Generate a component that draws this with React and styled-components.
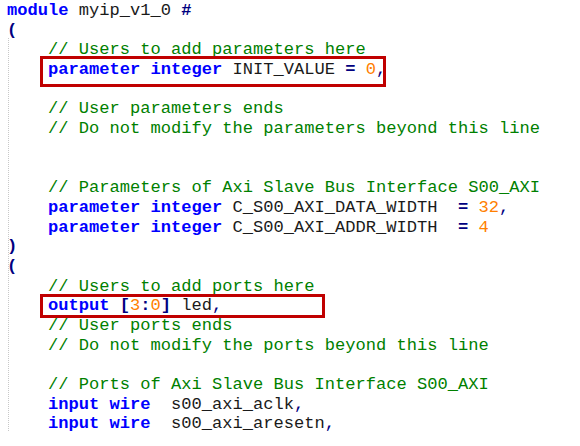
import React from "react";
import styled, { createGlobalStyle } from "styled-components";

const GlobalStyle = createGlobalStyle`
  html, body {
    margin: 0;
    padding: 0;
    background: #ffffff;
  }
`;

const LINE = 19.7;

// Editor surface
const Editor = styled.div`
  position: relative;
  width: 580px;
  height: 446px;
  overflow: hidden;
  background: #ffffff;
  padding: 1px 0 0 7px;
  box-sizing: border-box;
  font-family: "Liberation Mono", "Courier New", monospace;
  font-size: 17.08px;
  line-height: ${LINE}px;
  color: #1a1a1a;
`;

const Line = styled.div`
  position: relative;
  height: ${LINE}px;
  white-space: pre;
`;

const Guide = styled.div`
  position: absolute;
  left: 8px;
  top: 38px;
  height: 393px;
  border-left: 1px dotted #c8c8c8;
`;

const Highlight = styled.div`
  position: absolute;
  left: ${(p) => p.left}px;
  width: ${(p) => p.width}px;
  top: ${(p) => p.top}px;
  height: ${(p) => p.height}px;
  border: 3px solid #c00000;
  box-sizing: border-box;
  pointer-events: none;
`;

const Keyword = styled.span`
  color: #0000ff;
  font-weight: bold;
`;

const Op = styled.span`
  color: #000080;
  font-weight: bold;
`;

const Num = styled.span`
  color: #ff8000;
`;

const Comment = styled.span`
  color: #008000;
`;

const Punct = styled.span`
  color: #000080;
`;

const I = "    ";

const lines = [
  [<Keyword key="a">module</Keyword>, " myip_v1_0 ", <Op key="b">#</Op>],
  [<Op key="a">(</Op>],
  [I, <Comment key="a">// Users to add parameters here</Comment>],
  [
    I,
    <Keyword key="a">parameter integer</Keyword>,
    " INIT_VALUE ",
    <Op key="b">=</Op>,
    " ",
    <Num key="c">0</Num>,
    <Punct key="d">,</Punct>,
  ],
  [""],
  [I, <Comment key="a">// User parameters ends</Comment>],
  [I, <Comment key="a">// Do not modify the parameters beyond this line</Comment>],
  [""],
  [""],
  [I, <Comment key="a">// Parameters of Axi Slave Bus Interface S00_AXI</Comment>],
  [
    I,
    <Keyword key="a">parameter integer</Keyword>,
    " C_S00_AXI_DATA_WIDTH  ",
    <Op key="b">=</Op>,
    " ",
    <Num key="c">32</Num>,
    <Punct key="d">,</Punct>,
  ],
  [
    I,
    <Keyword key="a">parameter integer</Keyword>,
    " C_S00_AXI_ADDR_WIDTH  ",
    <Op key="b">=</Op>,
    " ",
    <Num key="c">4</Num>,
  ],
  [<Op key="a">)</Op>],
  [<Op key="a">(</Op>],
  [I, <Comment key="a">// Users to add ports here</Comment>],
  [
    I,
    <Keyword key="a">output</Keyword>,
    " ",
    <Op key="b">[</Op>,
    <Num key="c">3</Num>,
    <Op key="d">:</Op>,
    <Num key="e">0</Num>,
    <Op key="f">]</Op>,
    " led",
    <Punct key="g">,</Punct>,
  ],
  [I, <Comment key="a">// User ports ends</Comment>],
  [I, <Comment key="a">// Do not modify the ports beyond this line</Comment>],
  [""],
  [I, <Comment key="a">// Ports of Axi Slave Bus Interface S00_AXI</Comment>],
  [I, <Keyword key="a">input wire</Keyword>, "  s00_axi_aclk", <Punct key="b">,</Punct>],
  [I, <Keyword key="a">input wire</Keyword>, "  s00_axi_aresetn", <Punct key="b">,</Punct>],
];

export default function App() {
  return (
    <>
      <GlobalStyle />
      <Editor>
        <Guide />
        {lines.map((parts, i) => (
          <Line key={i}>{parts}</Line>
        ))}
        <Highlight left={40} width={346} top={56} height={31} />
        <Highlight left={40} width={285} top={294} height={24} />
      </Editor>
    </>
  );
}
